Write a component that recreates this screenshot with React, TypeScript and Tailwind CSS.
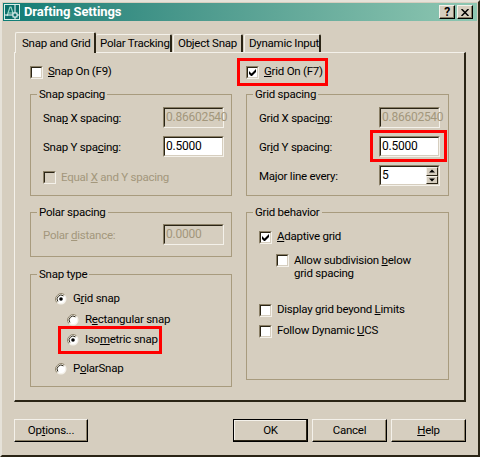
const font = "font-['Roboto','Liberation_Sans',Arial,sans-serif]";

function U({ children }: { children: string }) {
  return <span className="underline underline-offset-1">{children}</span>;
}

function Checkbox({ checked, disabled }: { checked?: boolean; disabled?: boolean }) {
  return (
    <span className="block w-[13px] h-[13px] shrink-0 border border-t-[#8a7f66] border-l-[#8a7f66] border-r-[#f4f1ea] border-b-[#f4f1ea]">
      <span
        className={`flex items-center justify-center w-full h-full border border-t-[#2a2415] border-l-[#2a2415] border-r-[#d6cebf] border-b-[#d6cebf] ${
          disabled ? "bg-[#d6cebf]" : "bg-white"
        }`}
      >
        {checked && (
          <svg width="7" height="7" viewBox="0 0 7 7" className="block">
            <path d="M0 2v3l2 2h1l4-4V0L2.500 4.500z" fill="#000" />
          </svg>
        )}
      </span>
    </span>
  );
}

function Radio({ checked }: { checked?: boolean }) {
  return (
    <svg width="12" height="12" viewBox="0 0 12 12" className="block shrink-0">
      <circle cx="6" cy="6" r="5.500" fill="#f4f1ea" />
      <path d="M1.800 9.500A5.500 5.500 0 0 1 9.500 1.800" fill="none" stroke="#8a7f66" strokeWidth="1" />
      <circle cx="6" cy="6" r="4" fill="#fff" />
      <path d="M2.900 8.500A4 4 0 0 1 8.500 2.900" fill="none" stroke="#2a2415" strokeWidth="1" />
      {checked && <circle cx="6" cy="6" r="1.800" fill="#000" />}
    </svg>
  );
}

function Field({ value, disabled }: { value: string; disabled?: boolean }) {
  return (
    <div className="w-[61px] h-[21px] shrink-0 border border-t-[#8a7f66] border-l-[#8a7f66] border-r-[#f4f1ea] border-b-[#f4f1ea]">
      <div
        className={`h-full pl-[1px] pt-[1px] leading-[15px] text-[12px] border border-t-[#2a2415] border-l-[#2a2415] border-r-[#d6cebf] border-b-[#d6cebf] ${
          disabled ? "bg-[#d6cebf] text-[#a3977c]" : "bg-white text-black"
        }`}
      >
        {value}
      </div>
    </div>
  );
}

function Group({ title, className, inner, children }: { title: string; className: string; inner: string; children: React.ReactNode }) {
  return (
    <fieldset className={`border border-[#a89b7e] ${className}`}>
      <legend className="ml-[6px] px-[2px] leading-[14px] text-black">{title}</legend>
      <div className={inner}>{children}</div>
    </fieldset>
  );
}

function Row({ label, children, muted }: { label: React.ReactNode; children: React.ReactNode; muted?: boolean }) {
  return (
    <div className="flex items-center justify-between h-[21px]">
      <span className={`pt-[2px] ${muted ? "text-[#a3977c]" : ""}`}>{label}</span>
      {children}
    </div>
  );
}

function Btn({ label, width, isDefault }: { label: React.ReactNode; width: string; isDefault?: boolean }) {
  return (
    <div
      className={`${width} h-[23px] flex items-center justify-center text-black bg-[#d6cebf] ${
        isDefault
          ? "border border-black shadow-[inset_-1px_-1px_0_#2a2415,inset_1px_1px_0_#f4f1ea]"
          : "border border-t-[#f4f1ea] border-l-[#f4f1ea] border-r-black border-b-black shadow-[inset_-1px_-1px_0_#8a7f66]"
      }`}
    >
      {label}
    </div>
  );
}

function CaptionButton({ children }: { children: React.ReactNode }) {
  return (
    <div className="w-[16px] h-[14px] flex items-center justify-center bg-[#d6cebf] border border-t-[#f4f1ea] border-l-[#f4f1ea] border-r-black border-b-black shadow-[inset_-1px_-1px_0_#8a7f66]">
      {children}
    </div>
  );
}

function Highlight({ className }: { className: string }) {
  return <div className={`absolute border-[3px] border-[#ff0000] pointer-events-none ${className}`} />;
}

export default function App() {
  return (
    <div className={`${font} w-[480px] h-[457px] bg-[#d6cebf] text-black text-[11.500px] tracking-[-0.25px] whitespace-nowrap border-t-2 border-l-2 border-t-[#e6e2d9] border-l-[#e6e2d9] border-r-2 border-b-2 border-r-[#2a2415] border-b-[#2a2415] overflow-hidden`}>
      <div className="mt-[1px] ml-[1px] mr-[1px] h-[18px] flex items-center pl-[1px] pr-[2px] bg-gradient-to-r from-[#0a7c75] to-[#8ec7b2]">
        <svg width="16" height="16" viewBox="0 0 16 16" className="block shrink-0">
          <rect x="0.500" y="0.500" width="15" height="15" fill="#0b6f6a" stroke="#d8efe8" />
          <path d="M3 12L6 3h1l3 9M4.500 9h4" fill="none" stroke="#9ad8c8" strokeWidth="1.200" />
          <path d="M1 11h14M11 1v14" stroke="#fff" />
          <rect x="9" y="9" width="4" height="4" fill="#0b6f6a" stroke="#fff" />
        </svg>
        <span className="ml-[4px] font-bold text-[13px] tracking-[-0.1px] text-white">Drafting Settings</span>
        <div className="ml-auto mr-[2px] flex gap-[2px]">
          <CaptionButton><span className="font-bold text-[12px] leading-none">?</span></CaptionButton>
          <CaptionButton>
            <svg width="8" height="7" viewBox="0 0 8 7" className="block">
              <path d="M0.500 0L7.500 7M7.500 0L0.500 7" stroke="#000" strokeWidth="1.500" />
            </svg>
          </CaptionButton>
        </div>
      </div>

      <div className="mt-[10px] ml-[12px] w-[452px]">
        <div className="flex items-end h-[21px] pl-[1px]">
          <div className="w-[81px] h-[21px] pl-[6px] pt-[2px] bg-[#d6cebf] border-t border-l border-t-[#f4f1ea] border-l-[#f4f1ea] border-r-2 border-r-[#2a2415] rounded-t-[2px] relative z-10 -mb-[1px]">Snap and Grid</div>
          <div className="w-[76px] h-[18px] pl-[4px] leading-[17px] border-t border-t-[#f4f1ea] border-r-2 border-r-[#2a2415] rounded-t-[2px]">Polar Tracking</div>
          <div className="w-[70px] h-[18px] ml-[1px] pl-[4px] leading-[17px] border-t border-l border-t-[#f4f1ea] border-l-[#f4f1ea] border-r-2 border-r-[#2a2415] rounded-t-[2px]">Object Snap</div>
          <div className="w-[77px] h-[18px] ml-[1px] pl-[4px] leading-[17px] border-t border-l border-t-[#f4f1ea] border-l-[#f4f1ea] border-r-2 border-r-[#2a2415] rounded-t-[2px]">Dynamic Input</div>
        </div>

        <div className="h-[350px] border border-t-[#f4f1ea] border-l-[#f4f1ea] border-r-2 border-b-2 border-r-[#2a2415] border-b-[#2a2415] pl-[15px] pt-[12px] flex gap-[14px]">
          <div className="w-[202px] flex flex-col">
            <div className="flex items-center gap-[5px] h-[14px]">
              <Checkbox />
              <span><U>S</U>nap On (F9)</span>
            </div>
            <Group title="Snap spacing" className="mt-[8px] h-[109px]" inner="pl-[12px] pr-[7px] pt-[6px]">
              <Row label={<>Sna<U>p</U> X spacing:</>}>
                <Field value="0.86602540" disabled />
              </Row>
              <div className="h-[8px]" />
              <Row label={<>Snap Y spa<U>c</U>ing:</>}>
                <Field value="0.5000" />
              </Row>
              <div className="flex items-center gap-[5px] mt-[12px] text-[#a3977c]">
                <Checkbox disabled />
                <span>Equal <U>X</U> and Y spacing</span>
              </div>
            </Group>
            <Group title="Polar spacing" className="mt-[9px] h-[52px]" inner="pl-[12px] pr-[7px] pt-[5px]">
              <Row muted label={<>Polar <U>d</U>istance:</>}>
                <Field value="0.0000" disabled />
              </Row>
            </Group>
            <Group title="Snap type" className="mt-[10px] h-[120px]" inner="pl-[24px] pt-[11px]">
              <div className="flex items-center gap-[6px] h-[14px]">
                <Radio checked />
                <span>G<U>r</U>id snap</span>
              </div>
              <div className="flex items-center gap-[6px] h-[14px] mt-[7px] ml-[12px]">
                <Radio />
                <span>R<U>e</U>ctangular snap</span>
              </div>
              <div className="relative flex items-center gap-[6px] h-[14px] mt-[6px] ml-[12px]">
                <Highlight className="-left-[9px] w-[104px] -top-[7px] -bottom-[7px]" />
                <Radio checked />
                <span>Iso<U>m</U>etric snap</span>
              </div>
              <div className="flex items-center gap-[6px] h-[14px] mt-[15px]">
                <Radio />
                <span>P<U>o</U>larSnap</span>
              </div>
            </Group>
          </div>

          <div className="w-[203px] flex flex-col">
            <div className="relative flex items-center gap-[5px] h-[14px]">
              <Highlight className="-left-[9px] w-[91px] -top-[7px] -bottom-[7px]" />
              <Checkbox checked />
              <span><U>G</U>rid On (F7)</span>
            </div>
            <Group title="Grid spacing" className="mt-[8px] h-[109px]" inner="pl-[12px] pr-[8px] pt-[6px]">
              <Row label={<>Grid X spaci<U>n</U>g:</>}>
                <Field value="0.86602540" disabled />
              </Row>
              <div className="h-[8px]" />
              <div className="relative">
                <Highlight className="right-[-7px] w-[77px] -top-[6px] -bottom-[5px]" />
                <Row label={<>Gr<U>i</U>d Y spacing:</>}>
                  <Field value="0.5000" />
                </Row>
              </div>
              <div className="h-[8px]" />
              <Row label={<>Major line every:</>}>
                <div className="relative">
                  <Field value="5" />
                  <div className="absolute right-[2px] top-[2px] w-[12px] h-[17px] flex flex-col">
                    {["M0 3.500L3 0.500L6 3.500z", "M0 0.500L3 3.500L6 0.500z"].map((d) => (
                      <div key={d} className="h-[9px] flex items-center justify-center bg-[#d6cebf] border border-t-[#f4f1ea] border-l-[#f4f1ea] border-r-[#2a2415] border-b-[#2a2415]">
                        <svg width="6" height="4" viewBox="0 0 6 4" className="block"><path d={d} fill="#000" /></svg>
                      </div>
                    ))}
                  </div>
                </div>
              </Row>
            </Group>
            <Group title="Grid behavior" className="mt-[9px] h-[175px]" inner="pl-[12px] pt-[11px]">
              <div className="flex items-center gap-[5px] h-[14px]">
                <Checkbox checked />
                <span><U>A</U>daptive grid</span>
              </div>
              <div className="flex gap-[5px] mt-[10px] ml-[17px] leading-[13px]">
                <Checkbox />
                <span>Allow subdivision <U>b</U>elow<br />grid spacing</span>
              </div>
              <div className="flex items-center gap-[5px] h-[14px] mt-[23px]">
                <Checkbox />
                <span>Display grid beyond <U>L</U>imits</span>
              </div>
              <div className="flex items-center gap-[5px] h-[14px] mt-[7px]">
                <Checkbox />
                <span>Follow Dynamic <U>U</U>CS</span>
              </div>
            </Group>
          </div>
        </div>

        <div className="flex mt-[17px]">
          <Btn label={<>Op<U>t</U>ions...</>} width="w-[74px]" />
          <div className="ml-auto flex gap-[4px]">
            <Btn label="OK" width="w-[75px]" isDefault />
            <Btn label="Cancel" width="w-[75px]" />
            <Btn label={<><U>H</U>elp</>} width="w-[75px]" />
          </div>
        </div>
      </div>
    </div>
  );
}
